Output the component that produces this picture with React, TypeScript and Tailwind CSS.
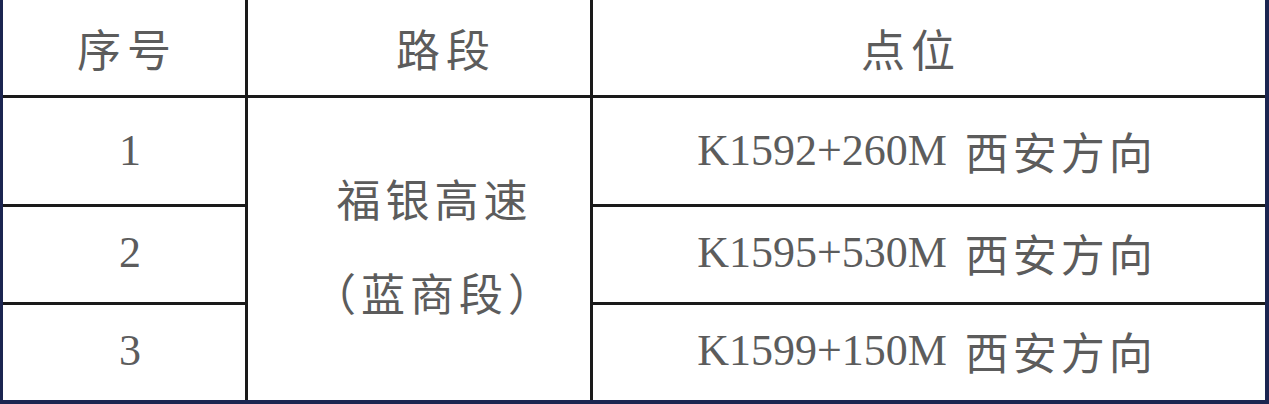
const cjk = "font-['Noto_Sans_CJK_SC',sans-serif]";
const latin = "font-['Liberation_Serif','Noto_Sans_CJK_SC',serif]";

const points = [
  { id: "1", km: "K1592+260M" },
  { id: "2", km: "K1595+530M" },
  { id: "3", km: "K1599+150M" },
];

const App = () => {
  return (
    <div className="w-[1269px] h-[404px] bg-white">
      <div className="w-full h-full border-l-[3px] border-r-[4px] border-b-[4px] border-[#1b2550] bg-[#1a1a1a]">
        <div className="grid grid-cols-[242px_342px_1fr] grid-rows-[95px_106px_95px_95px] gap-[3px] h-full">
          {/* header */}
          <div className={`bg-white flex items-center justify-center text-[44px] leading-none text-[#5c5c5c] ${cjk}`}>
            <span className="tracking-[6px] pl-[6px]">序号</span>
          </div>
          <div className={`bg-white flex items-center justify-center text-[44px] leading-none text-[#5c5c5c] ${cjk}`}>
            <span className="tracking-[6px] pl-[6px] ml-[48px]">路段</span>
          </div>
          <div className={`bg-white flex items-center justify-center text-[44px] leading-none text-[#5c5c5c] ${cjk}`}>
            <span className="tracking-[6px] pl-[6px] mr-[42px]">点位</span>
          </div>

          {/* row 1 + merged road cell */}
          <div className={`bg-white flex items-center justify-center text-[44px] leading-none text-[#5c5c5c] pl-[12px] ${latin}`}>
            {points[0].id}
          </div>
          <div className={`bg-white row-span-3 flex flex-col items-center justify-center gap-[50px] text-[44px] leading-none text-[#5c5c5c] pl-[26px] pb-[9px] ${cjk}`}>
            <span className="tracking-[5px] pl-[5px]">福银高速</span>
            <span className="tracking-[5px] pl-[5px]">（蓝商段）</span>
          </div>
          <div className="bg-white flex items-center justify-center text-[#5c5c5c] leading-none pr-[4px]">
            <span className={`text-[44px] ${latin}`}>{points[0].km}</span>
            <span className={`text-[44px] tracking-[4px] ml-[18px] ${cjk}`}>西安方向</span>
          </div>

          {points.slice(1).map((p) => (
            <div key={p.id} className="contents">
              <div className={`bg-white flex items-center justify-center text-[44px] leading-none text-[#5c5c5c] pl-[12px] pb-[4px] ${latin}`}>
                {p.id}
              </div>
              <div className="bg-white flex items-center justify-center text-[#5c5c5c] leading-none pr-[4px] pb-[4px]">
                <span className={`text-[44px] ${latin}`}>{p.km}</span>
                <span className={`text-[44px] tracking-[4px] ml-[18px] ${cjk}`}>西安方向</span>
              </div>
            </div>
          ))}
        </div>
      </div>
    </div>
  );
};

export default App;
